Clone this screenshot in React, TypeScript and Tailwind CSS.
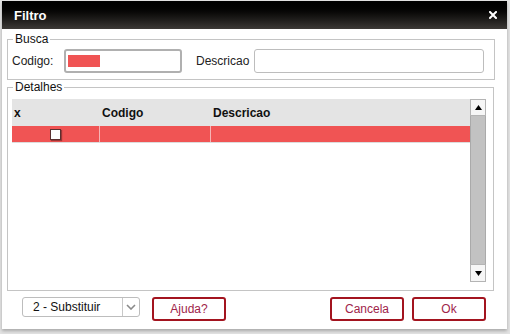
import React from "react";

export default function App() {
  const font = { fontFamily: '"Liberation Sans", Arial, sans-serif' };
  return (
    <div className="w-[510px] h-[334px] bg-[#e2e2e2] pt-[1px] pl-[2px]" style={font}>
      <div className="w-[505px] h-[328px] bg-white flex flex-col shadow-[0_2px_3px_rgba(0,0,0,0.25)]">
        {/* Title bar */}
        <div className="h-[28px] flex items-center justify-between pl-[12px] pr-[10px] bg-gradient-to-b from-[#000000] to-[#3d3a37]">
          <span className="text-white font-bold text-[13px] leading-none">Filtro</span>
          <svg width="8" height="8" viewBox="0 0 8 8">
            <path d="M1 1 L7 7 M7 1 L1 7" stroke="white" strokeWidth="2" strokeLinecap="square" />
          </svg>
        </div>

        {/* Body */}
        <div className="flex flex-col pl-[5px] pr-[13px] pt-[3px]">
          <fieldset className="border border-[#c4c4c4] pl-[4px] pr-[10px] pt-[3px] pb-[6px] m-0">
            <legend className="text-[12px] leading-[14px] text-[#111] px-[2px] ml-[1px]">Busca</legend>
            <div className="flex items-center text-[12px] text-[#222]">
              <span className="w-[52px]">Codigo:</span>
              <div className="w-[118px] h-[24px] border-2 border-[#b0b0b0] rounded-[3px] flex items-center pl-[2px]">
                <div className="w-[32px] h-[12px] bg-[#f05454]" />
              </div>
              <span className="w-[58px] ml-[14px]">Descricao</span>
              <div className="w-[230px] h-[24px] border border-[#bdbdbd] rounded-[3px]" />
            </div>
          </fieldset>

          <fieldset className="border border-[#c4c4c4] pl-[4px] pr-[7px] pt-[5px] pb-[8px] m-0">
            <legend className="text-[12px] leading-[14px] text-[#111] px-[2px] ml-[1px]">Detalhes</legend>
            <div className="flex h-[183px]">
              <div className="w-[458px] flex flex-col">
                <div className="h-[27px] bg-[#e4e4e4] flex items-center text-[12px] font-bold text-[#111]">
                  <div className="w-[88px] pl-[2px]">x</div>
                  <div className="w-[111px] pl-[2px]">Codigo</div>
                  <div className="flex-1 pl-[2px]">Descricao</div>
                </div>
                <div className="h-[17px] flex bg-[#f05454] border-b border-[#dcdcdc]">
                  <div className="w-[88px] border-r border-[#f6b4b4] flex items-center justify-center">
                    <div className="w-[11px] h-[11px] bg-white border border-[#5a3030] shadow-[1px_1px_1px_rgba(0,0,0,0.35)]" />
                  </div>
                  <div className="w-[111px] border-r border-[#f6b4b4]" />
                  <div className="flex-1" />
                </div>
              </div>
              <div className="w-[16px] flex flex-col">
                <div className="h-[17px] bg-[#f6f6f6] border border-[#b4b4b4] flex items-center justify-center">
                  <svg width="7" height="5" viewBox="0 0 7 5">
                    <path d="M0 5 L3.5 0 L7 5 Z" fill="#000" />
                  </svg>
                </div>
                <div className="flex-1 bg-[#c2c2c2] border-x border-[#aaaaaa]" />
                <div className="h-[18px] bg-[#f6f6f6] border border-[#b4b4b4] flex items-center justify-center">
                  <svg width="7" height="5" viewBox="0 0 7 5">
                    <path d="M0 0 L7 0 L3.5 5 Z" fill="#000" />
                  </svg>
                </div>
              </div>
            </div>
          </fieldset>

          {/* Buttons */}
          <div className="flex items-start mt-[6px] pl-[15px] pr-[8px] text-[12px]">
            <div className="w-[118px] h-[20px] border border-[#bdbdbd] rounded-[3px] flex items-center">
              <span className="flex-1 pl-[10px] text-[#111]">2 - Substituir</span>
              <div className="w-[17px] h-full border-l border-[#c8c8c8] flex items-center justify-center">
                <svg width="10" height="6" viewBox="0 0 10 6">
                  <path d="M1 1 L5 5 L9 1" stroke="#8a8a8a" strokeWidth="1.6" fill="none" />
                </svg>
              </div>
            </div>
            <button className="ml-[12px] w-[74px] h-[24px] border-2 border-[#a3141f] rounded-[3px] text-[#a0244a] bg-white">
              Ajuda?
            </button>
            <button className="ml-auto w-[74px] h-[24px] border-2 border-[#a3141f] rounded-[3px] text-[#a0244a] bg-white">
              Cancela
            </button>
            <button className="ml-[8px] w-[74px] h-[24px] border-2 border-[#a3141f] rounded-[3px] text-[#a0244a] bg-white">
              Ok
            </button>
          </div>
        </div>
      </div>
    </div>
  );
}
